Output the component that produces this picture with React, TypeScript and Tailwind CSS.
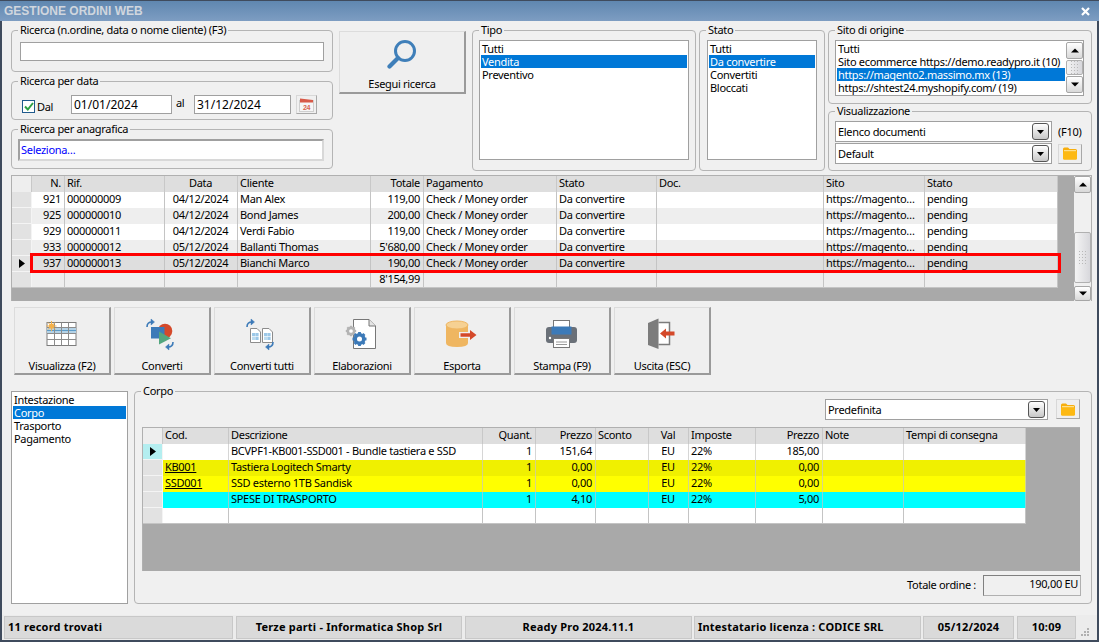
import type { ReactNode } from "react";

const orders = [
  { n: "921", rif: "000000009", data: "04/12/2024", cliente: "Man Alex", totale: "119,00", bg: "bg-white" },
  { n: "925", rif: "000000010", data: "04/12/2024", cliente: "Bond James", totale: "200,00", bg: "bg-[#eeeeee]" },
  { n: "929", rif: "000000011", data: "04/12/2024", cliente: "Verdi Fabio", totale: "119,00", bg: "bg-white" },
  { n: "933", rif: "000000012", data: "05/12/2024", cliente: "Ballanti Thomas", totale: "5'680,00", bg: "bg-[#eeeeee]" },
  { n: "937", rif: "000000013", data: "05/12/2024", cliente: "Bianchi Marco", totale: "190,00", bg: "bg-[#dedede]" },
];

const lines = [
  { cod: "", desc: "BCVPF1-KB001-SSD001 - Bundle tastiera e SSD", prezzo: "151,64", lordo: "185,00", bg: "bg-white", active: true },
  { cod: "KB001", desc: "Tastiera Logitech Smarty", prezzo: "0,00", lordo: "0,00", bg: "bg-[#f0f000]", active: false },
  { cod: "SSD001", desc: "SSD esterno 1TB Sandisk", prezzo: "0,00", lordo: "0,00", bg: "bg-[#ffff00]", active: false },
  { cod: "", desc: "SPESE DI TRASPORTO", prezzo: "4,10", lordo: "5,00", bg: "bg-[#00ffff]", active: false },
];

function GroupBox({ title, className, children }: { title: string; className: string; children?: ReactNode }) {
  return (
    <div className={`relative rounded-[4px] border border-[#b4b4b4] ${className}`}>
      <span className="absolute -top-[8px] left-[6px] bg-[#f0f0f0] px-[2px] leading-[14px] whitespace-nowrap">{title}</span>
      {children}
    </div>
  );
}

function ListBox({ items, selected, className }: { items: string[]; selected: number; className: string }) {
  return (
    <div className={`border border-[#a0a0a0] bg-white p-[1px] ${className}`}>
      {items.map((item, i) => (
        <div
          key={item}
          className={`h-[13px] pl-[1px] leading-[13px] whitespace-nowrap ${i === selected ? "bg-[#0078d7] text-white" : ""}`}
        >
          {item}
        </div>
      ))}
    </div>
  );
}

function ScrollArrow({ up, className }: { up?: boolean; className: string }) {
  return (
    <div className={`flex items-center justify-center rounded-[2px] border border-[#a6a6a6] bg-gradient-to-b from-white to-[#d9d9d9] ${className}`}>
      <svg width="8" height="5" viewBox="0 0 8 5">
        <path d={up ? "M4 0.5 L8 4.5 L0 4.5 Z" : "M0 0.5 L8 0.5 L4 4.5 Z"} fill="#000" />
      </svg>
    </div>
  );
}

function ScrollThumb({ className }: { className: string }) {
  return (
    <div className={`flex items-center justify-center rounded-[2px] border border-[#b0b0b0] bg-gradient-to-r from-[#f4f4f4] to-[#d8d8dc] ${className}`}>
      <svg width="7" height="13" viewBox="0 0 7 13">
        {[0, 3, 6, 9, 12].map((y) => (
          <g key={y} fill="#b8b8b8">
            <rect x="0" y={y} width="1" height="1" />
            <rect x="3" y={y} width="1" height="1" />
            <rect x="6" y={y} width="1" height="1" />
          </g>
        ))}
      </svg>
    </div>
  );
}

function Combo({ label, className }: { label: string; className: string }) {
  return (
    <div className={`flex h-[21px] items-center justify-between border border-[#a0a0a0] bg-white pr-[2px] pl-[2px] ${className}`}>
      <span className="pt-[1px]">{label}</span>
      <div className="flex h-[17px] w-[17px] items-center justify-center rounded-[3px] border border-[#555] bg-gradient-to-b from-white to-[#c8c8c8]">
        <svg width="7" height="4" viewBox="0 0 7 4">
          <path d="M0 0 L7 0 L3.5 4 Z" fill="#000" />
        </svg>
      </div>
    </div>
  );
}

function FolderButton({ className }: { className?: string }) {
  return (
    <div className={`flex h-[20px] w-[24px] items-center justify-center border border-[#d8d8d8] border-r-[#a8a8a8] border-b-[#a8a8a8] bg-[#efefef] ${className ?? ""}`}>
      <svg width="16" height="13" viewBox="0 0 16 13">
        <path d="M1 2 Q1 0.5 2.5 0.5 H6 L7.5 2 H13.5 Q15 2 15 3.5 V11 Q15 12.5 13.5 12.5 H2.5 Q1 12.5 1 11 Z" fill="#f7ae0d" />
        <rect x="2" y="3" width="12" height="1.5" fill="#ffe08a" />
        <rect x="1" y="4.5" width="14" height="8" rx="1.2" fill="#fdb913" />
      </svg>
    </div>
  );
}

function TurnArrows({ x1, y1, x2, y2 }: { x1: number; y1: number; x2: number; y2: number }) {
  return (
    <g fill="none" stroke="#3c7ab8" strokeWidth="1.6">
      <path d={`M${x1} ${y1 + 7} Q${x1} ${y1 + 2} ${x1 + 5} ${y1 + 2}`} />
      <path d={`M${x1 + 4} ${y1 - 1} L${x1 + 7.5} ${y1 + 2} L${x1 + 4} ${y1 + 5} Z`} fill="#3c7ab8" strokeWidth="0.5" />
      <path d={`M${x2 + 7} ${y2} Q${x2 + 7} ${y2 + 5} ${x2 + 2} ${y2 + 5}`} />
      <path d={`M${x2 + 3} ${y2 + 2} L${x2 - 0.5} ${y2 + 5} L${x2 + 3} ${y2 + 8} Z`} fill="#3c7ab8" strokeWidth="0.5" />
    </g>
  );
}

function GearShape({ cx, cy, r, color }: { cx: number; cy: number; r: number; color: string }) {
  return (
    <g>
      <circle cx={cx} cy={cy} r={r * 0.62} fill="none" stroke={color} strokeWidth={r * 0.5} />
      {[0, 45, 90, 135].map((a) => (
        <rect
          key={a}
          x={cx - r}
          y={cy - r * 0.2}
          width={r * 2}
          height={r * 0.4}
          fill={color}
          transform={`rotate(${a} ${cx} ${cy})`}
        />
      ))}
      <circle cx={cx} cy={cy} r={r * 0.36} fill="#fff" />
    </g>
  );
}

function IconVisualizza() {
  return (
    <svg width="40" height="36" viewBox="0 0 40 36">
      <rect x="5" y="4.5" width="29" height="23" fill="#fff" stroke="#7c7c7c" />
      <rect x="5" y="9" width="29" height="6.5" fill="#b4d2e6" />
      <path d="M5 12.5 H34" stroke="#5b9bc8" strokeWidth="1" />
      <path d="M5 15.5 H34 M5 21.5 H34 M12.5 4.5 V27.5 M19.5 4.5 V27.5 M26.5 4.5 V27.5 M5 9.5 H34" stroke="#8c8c8c" strokeWidth="1" fill="none" />
      <circle cx="9.5" cy="8" r="2.6" fill="#f4b14a" />
      <path d="M9.5 3 V13 M4.5 8 H14.5 M6 4.5 L13 11.5 M13 4.5 L6 11.5" stroke="#f4b14a" strokeWidth="1" />
    </svg>
  );
}

function IconConverti() {
  return (
    <svg width="40" height="36" viewBox="0 0 40 36">
      <circle cx="23" cy="13" r="7.3" fill="#d4492a" />
      <rect x="9" y="9" width="13.5" height="11.5" fill="#3c7ab8" />
      <path d="M17 13.5 V26.5 L29 20.3 Z" fill="#52a67e" />
      <TurnArrows x1={5} y1={2} x2={24} y2={24} />
    </svg>
  );
}

function IconConvertiTutti() {
  return (
    <svg width="40" height="36" viewBox="0 0 40 36">
      {[8, 20].map((x) => (
        <g key={x}>
          <path d={`M${x + 0.5} 10.5 H${x + 7} L${x + 10.5} 14 V24.5 H${x + 0.5} Z`} fill="#fff" stroke="#8c8c8c" />
          <rect x={x + 2} y="15" width="3.2" height="3.2" fill="#9cc8e8" />
          <rect x={x + 5.4} y="15" width="3.2" height="3.2" fill="#9cc8e8" />
          <rect x={x + 2} y="18.8" width="3.2" height="3.2" fill="#bcdcf0" />
          <rect x={x + 5.4} y="18.8" width="3.2" height="3.2" fill="#9cc8e8" />
        </g>
      ))}
      <TurnArrows x1={5} y1={2} x2={24} y2={24} />
    </svg>
  );
}

function IconElaborazioni() {
  return (
    <svg width="40" height="36" viewBox="0 0 40 36">
      <path d="M11.5 1.5 H27 L33.5 8 V30.5 H11.5 Z" fill="#fff" stroke="#777" />
      <path d="M27 1.5 V8 H33.5" fill="#e4e4e4" stroke="#777" />
      <GearShape cx={9} cy={13} r={5.2} color="#b4b4b4" />
      <GearShape cx={17.5} cy={21} r={7} color="#3c7ab8" />
    </svg>
  );
}

function IconEsporta() {
  return (
    <svg width="40" height="36" viewBox="0 0 40 36">
      <path d="M4 7 V25 Q4 29 15 29 Q26 29 26 25 V7 Z" fill="#efb661" />
      <ellipse cx="15" cy="7" rx="11" ry="4" fill="#f6d193" stroke="#efb661" />
      <path d="M17 14 H27 V10 L36 17 L27 24 V20 H17 Z" fill="#f0f0f0" />
      <path d="M18.5 15.2 H28 V12 L34.5 17 L28 22 V18.8 H18.5 Z" fill="#d4492a" />
    </svg>
  );
}

function IconStampa() {
  return (
    <svg width="40" height="36" viewBox="0 0 40 36">
      <rect x="11.5" y="2.5" width="16" height="8" fill="#fff" stroke="#777" />
      <path d="M4 12 Q4 9 7 9 H32 Q35 9 35 12 V22 Q35 25 32 25 H7 Q4 25 4 22 Z" fill="#6a7078" />
      <rect x="9.5" y="8.5" width="20" height="8" fill="#3c7ab8" />
      <circle cx="8" cy="20" r="1.2" fill="#fff" />
      <rect x="11.5" y="20.5" width="16" height="9" fill="#fff" stroke="#777" />
      <path d="M14 24 H25 M14 26.5 H25" stroke="#999" />
    </svg>
  );
}

function IconUscita() {
  return (
    <svg width="40" height="36" viewBox="0 0 40 36">
      <path d="M16.5 4.5 H27.5 V26.5 H16.5" fill="#fff" stroke="#7c7c7c" strokeWidth="1.5" />
      <path d="M6 5 L16.5 0.5 V31 L6 27 Z" fill="#7c7c7c" />
      <path d="M32.5 13.5 H24 V10.5 L18 15.5 L24 20.5 V17.5 H32.5 Z" fill="#d4492a" />
    </svg>
  );
}

const actions = [
  { label: "Visualizza (F2)", icon: <IconVisualizza /> },
  { label: "Converti", icon: <IconConverti /> },
  { label: "Converti tutti", icon: <IconConvertiTutti /> },
  { label: "Elaborazioni", icon: <IconElaborazioni /> },
  { label: "Esporta", icon: <IconEsporta /> },
  { label: "Stampa (F9)", icon: <IconStampa /> },
  { label: "Uscita (ESC)", icon: <IconUscita /> },
];

const headCell = "h-[16px] border-r border-[#c8c8c8] bg-[#dedede] pr-[3px] pl-[2px] leading-[14px] whitespace-nowrap";
const bodyCell = "h-[16px] overflow-hidden border-r border-[#c4c4c4] pr-[3px] pl-[2px] leading-[14px] whitespace-nowrap";

function OrdersGrid() {
  return (
    <div className="relative flex h-[126px] w-[1081px] border border-b-0 border-[#b0b0b0]">
      <div className="flex flex-1 flex-col bg-[#a9a9a9]">
        <div className="grid w-[1046px] grid-cols-[20px_33px_100px_73px_133px_53px_133px_100px_167px_101px_133px]">
          <div className={`${headCell} bg-[#eeeeee]`} />
          <div className={`${headCell} text-right`}>N.</div>
          <div className={headCell}>Rif.</div>
          <div className={`${headCell} text-center`}>Data</div>
          <div className={headCell}>Cliente</div>
          <div className={`${headCell} text-right`}>Totale</div>
          <div className={headCell}>Pagamento</div>
          <div className={headCell}>Stato</div>
          <div className={headCell}>Doc.</div>
          <div className={headCell}>Sito</div>
          <div className={headCell}>Stato</div>
          {orders.map((o, i) => (
            <div key={o.n} className={`col-span-11 grid grid-cols-subgrid ${o.bg}`}>
              <div className="flex h-[16px] items-center justify-center border-r border-b border-[#f4f4f4] bg-[#e2e2e2]">
                {i === 4 && (
                  <svg width="6" height="9" viewBox="0 0 6 9">
                    <path d="M0 0 L6 4.5 L0 9 Z" fill="#000" />
                  </svg>
                )}
              </div>
              <div className={`${bodyCell} text-right`}>{o.n}</div>
              <div className={bodyCell}>{o.rif}</div>
              <div className={`${bodyCell} text-center`}>{o.data}</div>
              <div className={bodyCell}>{o.cliente}</div>
              <div className={`${bodyCell} text-right`}>{o.totale}</div>
              <div className={bodyCell}>Check / Money order</div>
              <div className={bodyCell}>Da convertire</div>
              <div className={bodyCell} />
              <div className={bodyCell}>https://magento…</div>
              <div className={bodyCell}>pending</div>
            </div>
          ))}
          <div className="col-span-11 grid grid-cols-subgrid border-b border-[#c4c4c4] bg-[#eeeeee]">
            <div className="h-[15px] border-r border-[#f4f4f4] bg-[#e2e2e2]" />
            <div className={`${bodyCell} !h-[15px]`} />
            <div className={`${bodyCell} !h-[15px]`} />
            <div className={`${bodyCell} !h-[15px]`} />
            <div className={`${bodyCell} !h-[15px]`} />
            <div className={`${bodyCell} !h-[15px] text-right`}>8'154,99</div>
            <div className={`${bodyCell} !h-[15px]`} />
            <div className={`${bodyCell} !h-[15px]`} />
            <div className={`${bodyCell} !h-[15px]`} />
            <div className={`${bodyCell} !h-[15px]`} />
            <div className={`${bodyCell} !h-[15px]`} />
          </div>
        </div>
      </div>
      <div className="flex w-[17px] flex-col bg-[#f0f0f0]">
        <ScrollArrow up className="h-[17px]" />
        <div className="flex-1" />
        <ScrollThumb className="h-[51px]" />
        <ScrollArrow className="mt-[3px] h-[15px]" />
      </div>
      {/* riga selezionata evidenziata in rosso */}
      <div className="absolute top-[77px] left-[18px] h-[20px] w-[1031px] border-[3px] border-[#ff0000]" />
    </div>
  );
}

function LinesGrid() {
  const body = "h-[16px] overflow-hidden border-r border-[#c4c4c4]/70 pr-[3px] pl-[2px] leading-[14px] whitespace-nowrap";
  return (
    <div className="h-[144px] w-[938px] border-t border-l border-[#b0b0b0] bg-[#a9a9a9]">
      <div className="grid w-[883px] grid-cols-[20px_66px_254px_53px_60px_53px_40px_67px_67px_81px_122px]">
        <div className={`${headCell} bg-[#eeeeee]`} />
        <div className={headCell}>Cod.</div>
        <div className={headCell}>Descrizione</div>
        <div className={`${headCell} text-right`}>Quant.</div>
        <div className={`${headCell} text-right`}>Prezzo</div>
        <div className={headCell}>Sconto</div>
        <div className={`${headCell} text-center`}>Val</div>
        <div className={headCell}>Imposte</div>
        <div className={`${headCell} text-right`}>Prezzo</div>
        <div className={headCell}>Note</div>
        <div className={headCell}>Tempi di consegna</div>
        {lines.map((l) => (
          <div key={l.desc} className={`col-span-11 grid grid-cols-subgrid ${l.bg}`}>
            <div className={`flex h-[16px] items-center justify-center border-r border-b border-[#f4f4f4] ${l.active ? "bg-[#b4eef0]" : "bg-[#e2e2e2]"}`}>
              {l.active && (
                <svg width="6" height="9" viewBox="0 0 6 9">
                  <path d="M0 0 L6 4.5 L0 9 Z" fill="#000" />
                </svg>
              )}
            </div>
            <div className={`${body} underline`}>{l.cod}</div>
            <div className={body}>{l.desc}</div>
            <div className={`${body} text-right`}>1</div>
            <div className={`${body} text-right`}>{l.prezzo}</div>
            <div className={body} />
            <div className={`${body} text-center`}>EU</div>
            <div className={body}>22%</div>
            <div className={`${body} text-right`}>{l.lordo}</div>
            <div className={body} />
            <div className={body} />
          </div>
        ))}
        <div className="col-span-11 grid grid-cols-subgrid border-b border-[#c4c4c4] bg-white">
          <div className="h-[15px] border-r border-[#f4f4f4] bg-[#e2e2e2]" />
          {Array.from({ length: 10 }).map((_, i) => (
            <div key={i} className="h-[15px] border-r border-[#c4c4c4]" />
          ))}
        </div>
      </div>
    </div>
  );
}

export default function App() {
  return (
    <div className="flex h-[642px] w-[1099px] flex-col border-x-2 border-b-2 border-[#3f4b5d] bg-[#f0f0f0] font-['Noto_Sans',sans-serif] text-[11px] tracking-[-0.3px] text-black">
      <div className="-mx-[2px] flex h-[21px] items-center justify-between border-t border-[#3f4b5d] bg-gradient-to-b from-[#5f87b0] to-[#7d9dc2] pr-[9px] pl-[4px]">
        <span className="font-['Liberation_Sans',sans-serif] text-[12px] font-bold tracking-normal text-[#d0d6de]">GESTIONE ORDINI WEB</span>
        <svg width="9" height="9" viewBox="0 0 9 9">
          <path d="M1 1 L8 8 M8 1 L1 8" stroke="#fff" strokeWidth="2.2" />
        </svg>
      </div>

      <div className="mt-[9px] ml-[9px] flex h-[141px] items-start">
        <div className="flex w-[322px] flex-col">
          <GroupBox title="Ricerca (n.ordine, data o nome cliente) (F3)" className="h-[42px] pt-[11px] pl-[8px]">
            <div className="h-[19px] w-[304px] border border-[#a0a0a0] bg-white" />
          </GroupBox>
          <GroupBox title="Ricerca per data" className="mt-[9px] flex h-[39px] items-start pt-[13px] pl-[10px]">
            <div className="mt-[5px] flex h-[13px] w-[13px] items-center justify-center border border-[#1f5a8c] bg-white">
              <svg width="10" height="9" viewBox="0 0 10 9">
                <path d="M1 4.5 L3.8 7.5 L9 1" fill="none" stroke="#2ea043" strokeWidth="2" />
              </svg>
            </div>
            <span className="mt-[5px] ml-[2px] w-[34px] leading-[14px]">Dal</span>
            <div className="h-[19px] w-[101px] border border-[#a0a0a0] bg-white pl-[2px] text-[12px] leading-[17px] tracking-normal">01/01/2024</div>
            <span className="ml-[4px] w-[18px] leading-[16px]">al</span>
            <div className="h-[19px] w-[97px] border border-[#a0a0a0] bg-white pl-[2px] text-[12px] leading-[17px] tracking-normal">31/12/2024</div>
            <div className="ml-[5px] flex h-[19px] w-[21px] items-center justify-center border border-[#d8d8d8] border-r-[#a8a8a8] border-b-[#a8a8a8]">
              <svg width="15" height="14" viewBox="0 0 15 14">
                <rect x="0.5" y="2.5" width="14" height="11" fill="#f6f6f6" stroke="#cfcfcf" />
                <path d="M1 0.5 L14 2 V4.5 H1 Z" fill="#d85a48" />
                <text x="7.5" y="11.5" textAnchor="middle" fontSize="7" fontWeight="bold" fontFamily="'Liberation Sans', sans-serif" fill="#d8634e">24</text>
              </svg>
            </div>
          </GroupBox>
          <GroupBox title="Ricerca per anagrafica" className="mt-[9px] h-[40px] pt-[9px] pl-[6px]">
            <div className="h-[22px] w-[306px] border-2 border-[#d8d8d8] border-t-[#a0a0a0] border-l-[#a0a0a0] bg-white pl-[1px] leading-[18px] text-[#0000ff]">Seleziona…</div>
          </GroupBox>
        </div>

        <button className="mt-[1px] ml-[6px] flex h-[63px] w-[127px] flex-col items-center border border-[#dcdcdc] border-r-2 border-b-2 border-r-[#9a9a9a] border-b-[#9a9a9a] bg-[#efefef] tracking-[-0.3px]">
          <svg className="mt-[7px]" width="30" height="30" viewBox="0 0 30 30">
            <circle cx="18" cy="12" r="9.5" fill="none" stroke="#3f7fb9" strokeWidth="3" />
            <path d="M11 19 L2.5 27.5" stroke="#3f7fb9" strokeWidth="4.2" strokeLinecap="round" />
          </svg>
          <span className="mt-[8px] leading-[14px]">Esegui ricerca</span>
        </button>

        <GroupBox title="Tipo" className="ml-[6px] h-[141px] w-[224px] pt-[9px] pl-[6px]">
          <ListBox items={["Tutti", "Vendita", "Preventivo"]} selected={1} className="h-[120px] w-[210px]" />
        </GroupBox>
        <GroupBox title="Stato" className="ml-[3px] h-[141px] w-[126px] pt-[9px] pl-[7px]">
          <ListBox items={["Tutti", "Da convertire", "Convertiti", "Bloccati"]} selected={1} className="h-[120px] w-[110px]" />
        </GroupBox>

        <div className="ml-[3px] flex w-[264px] flex-col">
          <GroupBox title="Sito di origine" className="h-[74px] pt-[9px] pl-[6px]">
            <div className="flex h-[56px] w-[249px] border border-[#a0a0a0] bg-white">
              <ListBox
                items={["Tutti", "Sito ecommerce https://demo.readypro.it (10)", "https://magento2.massimo.mx (13)", "https://shtest24.myshopify.com/ (19)"]}
                selected={2}
                className="w-[231px] !border-0"
              />
              <div className="flex w-[17px] flex-col gap-[1px] pt-[1px]">
                <ScrollArrow up className="h-[17px]" />
                <ScrollThumb className="h-[15px]" />
                <ScrollArrow className="h-[17px]" />
              </div>
            </div>
          </GroupBox>
          <GroupBox title="Visualizzazione" className="mt-[7px] h-[60px] pt-[9px] pl-[6px]">
            <div className="flex items-center">
              <Combo label="Elenco documenti" className="w-[217px]" />
              <span className="ml-[6px] leading-[14px]">(F10)</span>
            </div>
            <div className="mt-[1px] flex items-center">
              <Combo label="Default" className="w-[217px]" />
              <FolderButton className="ml-[6px]" />
            </div>
          </GroupBox>
        </div>
      </div>

      <div className="mt-[4px] ml-[9px]">
        <OrdersGrid />
      </div>

      <div className="mt-[6px] ml-[12px] flex gap-[3px]">
        {actions.map((a) => (
          <button
            key={a.label}
            className="flex h-[68px] w-[97px] flex-col items-center border border-[#dcdcdc] border-r-2 border-b-2 border-r-[#9a9a9a] border-b-[#9a9a9a] bg-[#efefef] tracking-[-0.3px]"
          >
            <div className="mt-[10px] h-[36px] w-[40px]">{a.icon}</div>
            <span className="mt-[5px] leading-[14px]">{a.label}</span>
          </button>
        ))}
      </div>

      <div className="mt-[16px] ml-[9px] flex h-[213px] items-start">
        <ListBox items={["Intestazione", "Corpo", "Trasporto", "Pagamento"]} selected={1} className="h-[213px] w-[117px]" />
        <GroupBox title="Corpo" className="ml-[6px] h-[213px] w-[958px] pt-[7px] pl-[7px]">
          <div className="flex justify-end pr-[11px]">
            <Combo label="Predefinita" className="h-[20px] w-[223px]" />
            <FolderButton className="ml-[8px]" />
          </div>
          <div className="mt-[7px]">
            <LinesGrid />
          </div>
          <div className="mt-[4px] flex items-center justify-end pr-[10px]">
            <span className="mr-[7px]">Totale ordine :</span>
            <div className="h-[21px] w-[98px] border border-[#b0b0b0] border-t-[#808080] border-l-[#808080] pr-[2px] text-right leading-[15px]">190,00 EU</div>
          </div>
        </GroupBox>
      </div>

      <div className="mt-auto flex h-[25px] items-center gap-[2px] bg-[#ececec] pl-[2px] font-bold tracking-[0.2px]">
        <div className="flex h-[23px] w-[229px] items-center border border-[#c8c8c8] bg-[#dadada] pl-[3px]">11 record trovati</div>
        <div className="ml-[1px] flex h-[23px] w-[226px] items-center justify-center border border-[#c8c8c8] bg-[#dadada]">Terze parti - Informatica Shop Srl</div>
        <div className="ml-[1px] flex h-[23px] w-[227px] items-center justify-center border border-[#c8c8c8] bg-[#dadada]">Ready Pro 2024.11.1</div>
        <div className="flex h-[23px] w-[227px] items-center border border-[#c8c8c8] bg-[#dadada] pl-[3px]">Intestatario licenza : CODICE SRL</div>
        <div className="flex h-[23px] w-[91px] items-center justify-center border border-[#c8c8c8] bg-[#dadada]">05/12/2024</div>
        <div className="ml-[1px] flex h-[23px] w-[59px] items-center justify-center border border-[#c8c8c8] bg-[#dadada]">10:09</div>
        <svg className="mt-[6px] ml-[3px]" width="10" height="10" viewBox="0 0 10 10">
          <g fill="#b0b0b0">
            <rect x="6" y="2" width="2" height="2" />
            <rect x="3" y="5" width="2" height="2" />
            <rect x="6" y="5" width="2" height="2" />
            <rect x="0" y="8" width="2" height="2" />
            <rect x="3" y="8" width="2" height="2" />
            <rect x="6" y="8" width="2" height="2" />
          </g>
        </svg>
      </div>
    </div>
  );
}
